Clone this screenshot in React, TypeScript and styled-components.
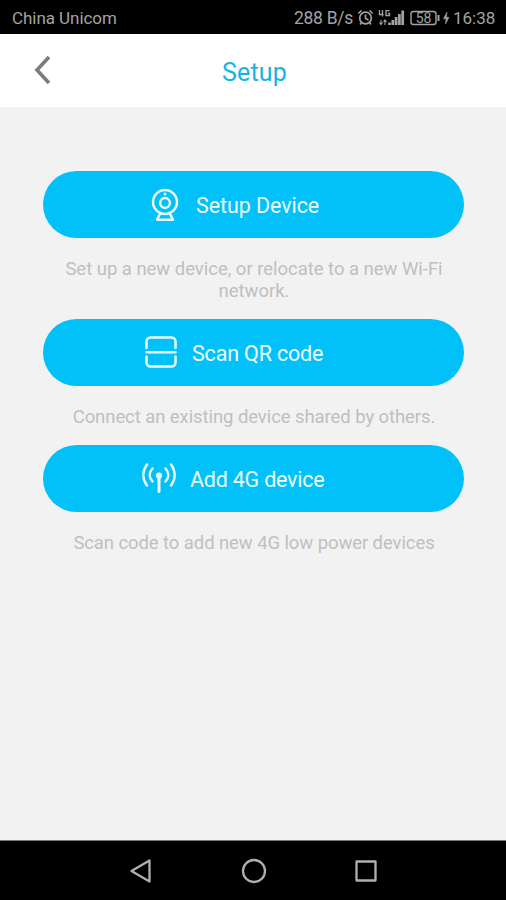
import React from 'react';
import styled, { createGlobalStyle } from 'styled-components';

const GlobalStyle = createGlobalStyle`
  * { box-sizing: border-box; }
  body { margin: 0; background: #f2f2f2; }
`;

const Screen = styled.div`
  display: flex;
  flex-direction: column;
  width: 506px;
  height: 900px;
  overflow: hidden;
  background: #f2f2f2;
  font-family: Roboto, 'Liberation Sans', sans-serif;
`;

const StatusBar = styled.header`
  display: flex;
  align-items: center;
  flex: 0 0 34px;
  padding: 2px 10px 0 12px;
  background: #000;
  color: #a3a3a3;
  font-size: 17px;
  line-height: 20px;
  white-space: nowrap;
`;

const Carrier = styled.span`
  flex: 1;
  letter-spacing: -0.05px;
`;

const Speed = styled.span`
  width: 63px;
  font-size: 17.5px;
  letter-spacing: -0.3px;
`;

const StatusIcons = styled.svg`
  display: block;
  flex: none;
  width: 96px;
  height: 20px;
`;

const Clock = styled.span`
  width: 43px;
  font-size: 17px;
`;

const TitleBar = styled.div`
  display: grid;
  grid-template-columns: 86px 1fr 86px;
  align-items: center;
  flex: 0 0 73px;
  background: #fff;
`;

const BackButton = styled.button`
  display: flex;
  justify-content: center;
  height: 73px;
  padding: 20px 0 0;
  border: 0;
  background: none;
`;

const Title = styled.h1`
  margin: 4px 0 0 3px;
  color: #16b4e0;
  font-size: 25px;
  font-weight: 400;
  line-height: 30px;
  letter-spacing: 0.2px;
  text-align: center;
`;

const Content = styled.main`
  display: flex;
  flex-direction: column;
  flex: 1;
  padding: 64px 42px 0 43px;
`;

const ActionButton = styled.button<{ $inset: number; $gap: number }>`
  display: flex;
  align-items: center;
  flex: none;
  gap: ${(p) => p.$gap}px;
  height: 66.5px;
  padding: 1.5px 0 0 ${(p) => p.$inset}px;
  border: 0;
  border-radius: 34px;
  background: #02c1f8;
  color: #ecfbff;
  font-family: inherit;
`;

const ActionLabel = styled.span<{ $spacing: number }>`
  padding-top: 2px;
  font-size: 21.5px;
  line-height: 26px;
  letter-spacing: ${(p) => p.$spacing}px;
  white-space: nowrap;
`;

const Hint = styled.p<{ $height: number; $spacing: number }>`
  flex: 0 0 ${(p) => p.$height}px;
  margin: 0;
  padding: 20px 17px 0 18px;
  color: #bfbfbf;
  font-size: 18.5px;
  line-height: 22px;
  letter-spacing: ${(p) => p.$spacing}px;
  text-align: center;
`;

const NavBar = styled.nav`
  display: grid;
  grid-template-columns: repeat(3, 112.5px);
  justify-content: center;
  justify-items: center;
  flex: 0 0 60px;
  padding: 15.5px 0 0 1px;
  border-top: 1px solid #777;
  background: #000;
`;

const Glyph = styled.svg`
  display: block;
  flex: none;
  fill: none;
  stroke: currentColor;
  overflow: visible;
`;

const NavButton = styled.button`
  width: 28px;
  height: 28px;
  padding: 0;
  border: 0;
  background: none;
  color: #b0b0b0;
`;

const CameraIcon = () => (
  <Glyph width="28" height="34" viewBox="0 0 28 34" strokeWidth="2.5">
    <circle cx="14" cy="14" r="12" />
    <circle cx="14" cy="15" r="4.9" />
    <circle cx="14" cy="6" r="1.5" fill="currentColor" stroke="none" />
    <path d="M9.2 25.5 6 31.7H22L18.8 25.5" strokeLinejoin="round" />
  </Glyph>
);

const ScanIcon = () => (
  <Glyph width="32" height="34" viewBox="0 0 32 34" strokeWidth="2.5" strokeLinecap="round">
    <path d="M1.5 12V5.5a4 4 0 0 1 4-4h21a4 4 0 0 1 4 4V12M1.5 20.5v6a4 4 0 0 0 4 4h21a4 4 0 0 0 4-4V20.5M1.5 16.2h29" />
  </Glyph>
);

const AntennaIcon = () => (
  <Glyph width="34" height="32" viewBox="0 0 34 32" strokeWidth="2.5" strokeLinecap="round">
    <path d="M17 13v15.5" strokeWidth="3" />
    <circle cx="17" cy="12.5" r="3.1" fill="currentColor" stroke="none" />
    <path d="M5 1.5C.2 8 .2 16 5 22.5M10.5 5.5c-3.7 4-3.7 9 0 13M29 1.5c4.8 6.5 4.8 14.5 0 21M23.5 5.5c3.7 4 3.7 9 0 13" />
  </Glyph>
);

const actions = [
  { label: 'Setup Device', hint: 'Set up a new device, or relocate to a new Wi-Fi network.', icon: <CameraIcon />, inset: 108, gap: 17, hintHeight: 81.5, labelSpacing: -0.08, hintSpacing: -0.03 },
  { label: 'Scan QR code', hint: 'Connect an existing device shared by others.', icon: <ScanIcon />, inset: 102, gap: 15, hintHeight: 59.5, labelSpacing: -0.17, hintSpacing: -0.08 },
  { label: 'Add 4G device', hint: 'Scan code to add new 4G low power devices', icon: <AntennaIcon />, inset: 99, gap: 14, hintHeight: 59.5, labelSpacing: -0.22, hintSpacing: -0.09 },
];

export default function App() {
  return (
    <Screen>
      <GlobalStyle />
      <StatusBar>
        <Carrier>China Unicom</Carrier>
        <Speed>288 B/s</Speed>
        <StatusIcons viewBox="0 0 96 20" fill="none" stroke="#a3a3a3">
          <circle cx="8.5" cy="10" r="5.8" strokeWidth="1.7" />
          <path d="M8.5 6.5V10.5L11.5 12M1.3 5.5 4.5 2.5M12.5 2.5 15.7 5.5M4.5 14.5 3 16.5M12.5 14.5 14 16.5" strokeWidth="1.6" />
          <path d="M22.5 2V6.5H26.5M25.5 2V8.5M32.5 2.7H29V7.5H32.5V5.3H31" strokeWidth="1.3" />
          <path d="M24 12V16M22.5 14.5 24 16.5 25.5 14.5M28 17V12.5M26.5 14 28 12 29.5 14" strokeWidth="1.1" />
          <path d="M32.5 17V14.5M35.8 17V12M39.1 17V9M42.4 17V6M45.7 17V2.5" strokeWidth="2.7" />
          <rect x="54" y="3.5" width="25" height="13" rx="2.5" strokeWidth="1.4" />
          <path d="M81.5 7V13" strokeWidth="2" />
          <text x="66.5" y="15" textAnchor="middle" fill="#a3a3a3" stroke="none" fontSize="14">58</text>
          <path d="M90 4 86.5 10.7H89L88.5 16 92 9.3H89.5Z" fill="#a3a3a3" stroke="#a3a3a3" strokeWidth="0.5" />
        </StatusIcons>
        <Clock>16:38</Clock>
      </StatusBar>
      <TitleBar>
        <BackButton aria-label="Back">
          <Glyph width="18" height="32" viewBox="0 0 18 32" strokeWidth="3.6" color="#7c7c7c">
            <path d="M15 3 3 16 15 29" />
          </Glyph>
        </BackButton>
        <Title>Setup</Title>
      </TitleBar>
      <Content>
        {actions.map((a) => (
          <React.Fragment key={a.label}>
            <ActionButton $inset={a.inset} $gap={a.gap}>
              {a.icon}
              <ActionLabel $spacing={a.labelSpacing}>{a.label}</ActionLabel>
            </ActionButton>
            <Hint $height={a.hintHeight} $spacing={a.hintSpacing}>{a.hint}</Hint>
          </React.Fragment>
        ))}
      </Content>
      <NavBar>
        <NavButton aria-label="Back">
          <Glyph width="28" height="28" viewBox="0 0 28 28" strokeWidth="2.3" strokeLinejoin="round">
            <path d="M4.5 14 22.5 3.5V24.5Z" />
          </Glyph>
        </NavButton>
        <NavButton aria-label="Home">
          <Glyph width="28" height="28" viewBox="0 0 28 28" strokeWidth="2.3">
            <circle cx="14" cy="14" r="11" />
          </Glyph>
        </NavButton>
        <NavButton aria-label="Recent apps">
          <Glyph width="28" height="28" viewBox="0 0 28 28" strokeWidth="2.3" strokeLinejoin="round">
            <rect x="4.5" y="4.5" width="19" height="19" />
          </Glyph>
        </NavButton>
      </NavBar>
    </Screen>
  );
}
